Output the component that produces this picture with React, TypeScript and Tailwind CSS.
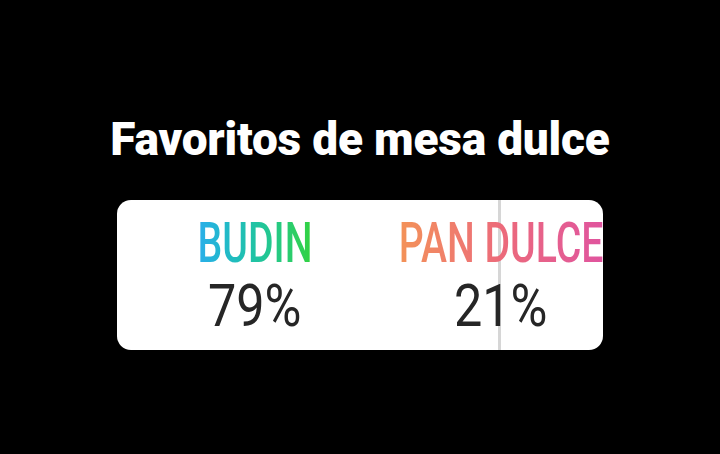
import React from "react";

export default function App() {
  return (
    <div className="w-[720px] h-[454px] bg-black flex flex-col items-center pt-[113px] font-['Roboto',sans-serif]">
      <h1 className="text-white font-black text-[46px] leading-[52px] tracking-[-0.2px]">
        Favoritos de mesa dulce
      </h1>
      <div className="relative mt-[35px] w-[486px] h-[150px] bg-white rounded-[14px] overflow-hidden flex pt-[15px]">
        <div className="absolute left-[381px] top-0 bottom-0 w-[3px] bg-[#d6d6d6]" />
        <div className="relative w-[276px] shrink-0 flex flex-col items-center">
          <div className="text-[56px] leading-[56px] font-medium scale-x-[0.7] whitespace-nowrap">
            <span className="bg-linear-to-r from-[#2aaeea] to-[#33d23a] bg-clip-text text-transparent">
              BUDIN
            </span>
          </div>
          <div className="mt-[5px] text-[60px] leading-[60px] font-normal text-[#262626] scale-x-[0.84] whitespace-nowrap">
            79%
          </div>
        </div>
        <div className="relative w-[216px] shrink-0 flex flex-col items-center">
          <div className="text-[56px] leading-[56px] font-medium scale-x-[0.7] whitespace-nowrap">
            <span className="bg-linear-to-r from-[#f39257] via-[#ec6a7a] to-[#e0549e] bg-clip-text text-transparent">
              PAN DULCE
            </span>
          </div>
          <div className="mt-[5px] text-[60px] leading-[60px] font-normal text-[#262626] scale-x-[0.84] whitespace-nowrap">
            21%
          </div>
        </div>
      </div>
    </div>
  );
}
